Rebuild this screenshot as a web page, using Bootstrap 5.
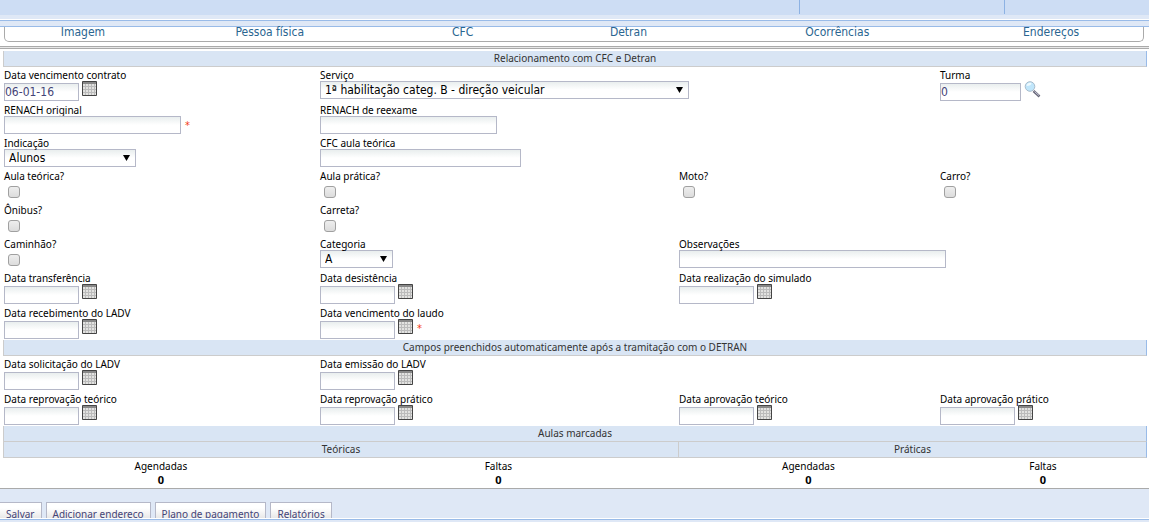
<!DOCTYPE html>
<html lang="pt-BR">
<head>
<meta charset="utf-8">
<meta name="viewport" content="width=device-width, initial-scale=1">
<title>Relacionamento com CFC e Detran</title>
<link href="https://cdn.jsdelivr.net/npm/bootstrap@5.3.0/dist/css/bootstrap.min.css" rel="stylesheet">
<style>
  body { font-family: "Noto Sans", sans-serif; font-size: 10px; line-height: 14px; color: #000; background: #fff; }

  /* frame bars */
  .bar-head { background: #cdddf4; height: 15px; }
  .bar-head span { height: 14px; border-right: 1px solid #8db2e3; }
  .bar-head .part-a { width: 69.6%; }
  .bar-head .part-b { width: 17.9%; }
  .bar-sub { background: #dfe8f6; height: 4px; }
  .bar-split { background: #dfe8f6; height: 7px; margin-top: 1px; border: solid #99bbe8; border-width: 1px 0; }

  .tab-strip { flex: none; display: grid; grid-template-columns: 156fr 218fr 168fr 164fr 254fr 174fr; height: 15px; margin: 0 5px 4px 4px; padding-right: 5px; border: 1px solid #aaa; border-top: 0; border-radius: 0 0 5px 5px; }
  .tab-strip a { color: #2a6590; font-family: "DejaVu Sans Condensed", "DejaVu Sans", sans-serif; font-size: 12px; line-height: 10px; text-align: center; text-decoration: none; }
  .rule-top { flex: none; height: 3px; border: solid #aaa; border-width: 1px 0; background: #e8e8e8; margin-bottom: 2px; }

  .form-area { flex: none; margin: 0 2px 0 3px; }
  .section-title { height: 16px; margin: 0; font-size: 10px; font-weight: 400; line-height: 15px; text-align: center; color: #333; background: #d9e5f4; border: solid #ccc; border-width: 0 1px 1px; border-right-color: #99bbe8; }
  .form-line { display: grid; grid-template-columns: minmax(0, 316fr) minmax(0, 359fr) minmax(0, 261fr) minmax(0, 208fr); padding-bottom: 1px; }
  .field { padding-left: 1px; }
  .at-4 { grid-column: 4; }
  .field label { display: block; height: 14px; line-height: 16px; white-space: nowrap; }

  .box { display: block; height: 18px; padding: 0; border: 1px solid #b5b8c8; border-radius: 0; font-family: "DejaVu Sans Condensed", "DejaVu Sans", sans-serif; font-size: 12px; line-height: 16px; color: #444477; background: linear-gradient(#e9eeee, #fff 8px); }
  .w-date { width: 75px; margin-top: 2px; }
  .w-turma { width: 81px; margin-top: 2px; }
  .w-renach { width: 177px; }
  .w-cfc { width: 201px; }
  .w-obs { width: 267px; max-width: none; }
  select.box { appearance: none; padding-left: 4px; color: #000;
    background: url("data:image/svg+xml,%3Csvg xmlns='http://www.w3.org/2000/svg' width='7' height='6'%3E%3Cpath d='M0 0h7L3.500 6z'/%3E%3C/svg%3E") right 5px top 5px no-repeat, linear-gradient(#e9eeee, #fff 8px); }
  .w-serv { width: 369px; }
  .w-ind { width: 132px; }
  .w-cat { width: 73px; }
  .tick { display: block; appearance: none; width: 12px; height: 12px; margin: 4px 4px 3px; border: 1px solid #a0a0a0; border-radius: 3px; background: linear-gradient(#eee, #dcdcdc); }
  .tick:checked { background: #888; }
  .icon-btn { display: block; padding: 0; border: 0; background: none; margin-left: 3px; height: 15px; }
  .icon-btn svg { display: block; }
  .req { color: #f43b18; margin: 5px 0 0 4px; font-family: "DejaVu Sans Condensed", "DejaVu Sans", sans-serif; font-size: 11px; line-height: 10px; }

  .lessons { width: 100%; table-layout: fixed; border-collapse: separate; border-spacing: 0; text-align: center; }
  .lessons .head th { height: 16px; padding: 0; line-height: 15px; font-weight: 400; color: #333; background: #d9e5f4; border-bottom: 1px solid #ccc; text-align: center; }
  .lessons .head th:first-child { border-left: 1px solid #ccc; }
  .lessons .head th:last-child { border-right: 1px solid #99bbe8; }
  .lessons .head th + th { border-left: 1px solid #ccc; }
  .lessons .names th { padding: 2px 0 0; font-weight: 400; line-height: 13px; text-align: center; }
  .lessons td { padding: 0 0 2px; font-size: 11px; font-weight: 700; line-height: 13px; }
  .col-a { width: 27.6%; } .col-b { width: 31.4%; } .col-c { width: 22.8%; } .col-d { width: 18.2%; }

  .foot { flex: none; background: #dfe8f6; border-top: 1px solid #aaa; gap: 4px; padding-top: 13px; height: 30px; overflow: hidden; }
  .foot button { flex: none; height: 24px; padding: 0 6px; border: 1px solid #b5b8c8; background: linear-gradient(#fff 5px, #ddd 20px); line-height: 22px; color: #444477; }
  .bar-end { margin-top: 1px; border-top: 1px solid #99bbe8; background: #dfe8f6; }
</style>
</head>
<body>
<svg class="d-none" aria-hidden="true">
  <symbol id="cal" viewBox="0 0 15 15">
    <path fill="#e2e2e0" d="M0 0h15v15H0z"/>
    <path fill="#888" d="M1 1h13v2H1z"/>
    <path stroke="#bbb" fill="none" d="M3.500 3v11M6.500 3v11M9.500 3v11M12.500 3v11M1 5.500h13M1 8.500h13M1 11.500h13"/>
    <path stroke="#444" fill="none" d="M.5.5h14v14H.5z"/>
  </symbol>
</svg>

<div class="d-flex flex-column vh-100 overflow-hidden">
  <header class="flex-shrink-0">
    <div class="bar-head d-flex"><span class="part-a"></span><span class="part-b"></span></div>
    <div class="bar-sub"></div>
    <div class="bar-split"></div>
  </header>

  <nav class="tab-strip" aria-label="Cadastro">
    <a href="#">Imagem</a><a href="#">Pessoa física</a><a href="#">CFC</a><a href="#">Detran</a><a href="#">Ocorrências</a><a href="#">Endereços</a>
  </nav>
  <div class="rule-top"></div>

  <main class="form-area">
    <h2 class="section-title">Relacionamento com CFC e Detran</h2>
    <div class="form-line">
      <div class="field"><label for="venc">Data vencimento contrato</label>
        <div class="d-flex align-items-start"><input class="box w-date" id="venc" type="text" value="06-01-16"><button class="icon-btn" type="button" aria-label="Calendário"><svg width="15" height="15"><use href="#cal"/></svg></button></div></div>
      <div class="field"><label for="serv">Serviço</label>
        <select class="box w-serv" id="serv"><option>1ª habilitação categ. B - direção veicular</option></select></div>
      <div class="field at-4"><label for="turma">Turma</label>
        <div class="d-flex align-items-start"><input class="box w-turma" id="turma" type="text" value="0"><button class="icon-btn" type="button" aria-label="Pesquisar"><svg width="17" height="17" viewBox="0 0 17 17"><path d="M9.500 10l6 5.500" stroke="#667" stroke-width="2.500"/><path d="M10.500 10.500l4.500 4" stroke="#ccd" stroke-width="1"/><circle cx="6" cy="5.500" r="4.800" fill="#c0e6fb" stroke="#a9bccb"/><path d="M2.500 5a3.500 3.500 0 0 1 5-3c0 2-2 3-5 3z" fill="#eefaff"/></svg></button></div></div>
    </div>
    <div class="form-line">
      <div class="field"><label for="ren1">RENACH original</label>
        <div class="d-flex align-items-start"><input class="box w-renach" id="ren1" type="text"><span class="req">*</span></div></div>
      <div class="field"><label for="ren2">RENACH de reexame</label><input class="box w-renach" id="ren2" type="text"></div>
    </div>
    <div class="form-line">
      <div class="field"><label for="ind">Indicação</label><select class="box w-ind" id="ind"><option>Alunos</option></select></div>
      <div class="field"><label for="cfc">CFC aula teórica</label><input class="box w-cfc" id="cfc" type="text"></div>
    </div>
    <div class="form-line">
      <div class="field"><label for="c1">Aula teórica?</label><input class="tick" id="c1" type="checkbox"></div>
      <div class="field"><label for="c2">Aula prática?</label><input class="tick" id="c2" type="checkbox"></div>
      <div class="field"><label for="c3">Moto?</label><input class="tick" id="c3" type="checkbox"></div>
      <div class="field"><label for="c4">Carro?</label><input class="tick" id="c4" type="checkbox"></div>
    </div>
    <div class="form-line">
      <div class="field"><label for="c5">Ônibus?</label><input class="tick" id="c5" type="checkbox"></div>
      <div class="field"><label for="c6">Carreta?</label><input class="tick" id="c6" type="checkbox"></div>
    </div>
    <div class="form-line">
      <div class="field"><label for="c7">Caminhão?</label><input class="tick" id="c7" type="checkbox"></div>
      <div class="field"><label for="cat">Categoria</label><select class="box w-cat" id="cat"><option>A</option></select></div>
      <div class="field"><label for="obs">Observações</label><input class="box w-obs" id="obs" type="text"></div>
    </div>
    <div class="form-line">
      <div class="field"><label for="d1">Data transferência</label>
        <div class="d-flex align-items-start"><input class="box w-date" id="d1" type="text"><button class="icon-btn" type="button" aria-label="Calendário"><svg width="15" height="15"><use href="#cal"/></svg></button></div></div>
      <div class="field"><label for="d2">Data desistência</label>
        <div class="d-flex align-items-start"><input class="box w-date" id="d2" type="text"><button class="icon-btn" type="button" aria-label="Calendário"><svg width="15" height="15"><use href="#cal"/></svg></button></div></div>
      <div class="field"><label for="d3">Data realização do simulado</label>
        <div class="d-flex align-items-start"><input class="box w-date" id="d3" type="text"><button class="icon-btn" type="button" aria-label="Calendário"><svg width="15" height="15"><use href="#cal"/></svg></button></div></div>
    </div>
    <div class="form-line">
      <div class="field"><label for="d4">Data recebimento do LADV</label>
        <div class="d-flex align-items-start"><input class="box w-date" id="d4" type="text"><button class="icon-btn" type="button" aria-label="Calendário"><svg width="15" height="15"><use href="#cal"/></svg></button></div></div>
      <div class="field"><label for="d5">Data vencimento do laudo</label>
        <div class="d-flex align-items-start"><input class="box w-date" id="d5" type="text"><button class="icon-btn" type="button" aria-label="Calendário"><svg width="15" height="15"><use href="#cal"/></svg></button><span class="req">*</span></div></div>
    </div>

    <h2 class="section-title">Campos preenchidos automaticamente após a tramitação com o DETRAN</h2>
    <div class="form-line">
      <div class="field"><label for="d6">Data solicitação do LADV</label>
        <div class="d-flex align-items-start"><input class="box w-date" id="d6" type="text"><button class="icon-btn" type="button" aria-label="Calendário"><svg width="15" height="15"><use href="#cal"/></svg></button></div></div>
      <div class="field"><label for="d7">Data emissão do LADV</label>
        <div class="d-flex align-items-start"><input class="box w-date" id="d7" type="text"><button class="icon-btn" type="button" aria-label="Calendário"><svg width="15" height="15"><use href="#cal"/></svg></button></div></div>
    </div>
    <div class="form-line">
      <div class="field"><label for="d8">Data reprovação teórico</label>
        <div class="d-flex align-items-start"><input class="box w-date" id="d8" type="text"><button class="icon-btn" type="button" aria-label="Calendário"><svg width="15" height="15"><use href="#cal"/></svg></button></div></div>
      <div class="field"><label for="d9">Data reprovação prático</label>
        <div class="d-flex align-items-start"><input class="box w-date" id="d9" type="text"><button class="icon-btn" type="button" aria-label="Calendário"><svg width="15" height="15"><use href="#cal"/></svg></button></div></div>
      <div class="field"><label for="d10">Data aprovação teórico</label>
        <div class="d-flex align-items-start"><input class="box w-date" id="d10" type="text"><button class="icon-btn" type="button" aria-label="Calendário"><svg width="15" height="15"><use href="#cal"/></svg></button></div></div>
      <div class="field"><label for="d11">Data aprovação prático</label>
        <div class="d-flex align-items-start"><input class="box w-date" id="d11" type="text"><button class="icon-btn" type="button" aria-label="Calendário"><svg width="15" height="15"><use href="#cal"/></svg></button></div></div>
    </div>

    <table class="lessons">
      <colgroup><col class="col-a"><col class="col-b"><col class="col-c"><col class="col-d"></colgroup>
      <thead>
        <tr class="head"><th colspan="4">Aulas marcadas</th></tr>
        <tr class="head"><th colspan="2">Teóricas</th><th colspan="2">Práticas</th></tr>
        <tr class="names"><th>Agendadas</th><th>Faltas</th><th>Agendadas</th><th>Faltas</th></tr>
      </thead>
      <tbody><tr><td>0</td><td>0</td><td>0</td><td>0</td></tr></tbody>
    </table>
  </main>

  <footer class="foot d-flex">
    <button class="border-start-0" type="button">Salvar</button>
    <button type="button">Adicionar endereço</button>
    <button type="button">Plano de pagamento</button>
    <button type="button">Relatórios</button>
  </footer>
  <div class="bar-end flex-grow-1"></div>
</div>
<script src="https://cdn.jsdelivr.net/npm/bootstrap@5.3.0/dist/js/bootstrap.bundle.min.js"></script>
</body>
</html>
